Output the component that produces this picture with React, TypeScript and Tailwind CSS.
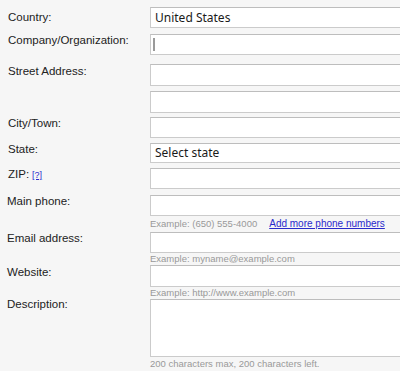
const label = "w-[150px] shrink-0 text-[11.5px] leading-[14px] text-[#222]";
const box = "w-[262px] shrink-0 border border-[#cbcbcb] border-t-[#bdbdbd] bg-white";
const hint = "text-[9.5px] leading-[12px] text-[#999]";

function Row({
  name,
  top,
  h,
  pad = "-mt-px pl-[8px]",
  children,
  className = "",
}: {
  name?: React.ReactNode;
  top: string;
  h: string;
  pad?: string;
  children?: React.ReactNode;
  className?: string;
}) {
  return (
    <div className={`flex items-start ${top}`}>
      <div className={`${label} ${pad}`}>{name}</div>
      <div className={`${box} ${h} ${className} flex items-center`}>{children}</div>
    </div>
  );
}

function Hint({ children, top = "" }: { children: React.ReactNode; top?: string }) {
  return (
    <div className={`flex ${top}`}>
      <div className="w-[150px] shrink-0" />
      <div className={`${hint} whitespace-nowrap`}>{children}</div>
    </div>
  );
}

export default function App() {
  return (
    <div
      className="w-[400px] h-[371px] overflow-hidden bg-[#f6f6f6] pt-[7px]"
      style={{ fontFamily: '"Liberation Sans", Arial, sans-serif' }}
    >
      <Row name="Country:" top="" h="h-[21px]" pad="pt-[3px] pl-[8px]">
        <span className="pl-[4px] text-[12px] text-[#1a1a1a] font-['Noto_Sans',sans-serif]">
          United States
        </span>
      </Row>
      <Row name="Company/Organization:" top="mt-[6px]" h="h-[21px]" className="bg-[#fffde8]">
        <span className="ml-[2px] w-[2px] h-[13px] bg-[#9a9a9a]" />
      </Row>
      <Row name="Street Address:" top="mt-[9px]" h="h-[22px]" pad="pt-0 pl-[8px]" />
      <Row top="mt-[5px]" h="h-[22px]" />
      <Row name="City/Town:" top="mt-[4px]" h="h-[21px]" />
      <Row name="State:" top="mt-[5px]" h="h-[20px]">
        <span className="pl-[4px] text-[12px] text-[#1a1a1a] font-['Noto_Sans',sans-serif]">
          Select state
        </span>
      </Row>
      <Row
        name={
          <span className="flex items-baseline gap-[3px]">
            ZIP:
            <a href="#" className="text-[9px] text-[#2a2acc] underline">
              [?]
            </a>
          </span>
        }
        top="mt-[5px]"
        h="h-[21px]"
      />
      <Row name="Main phone:" top="mt-[6px]" h="h-[21px]" pad="-mt-px pl-[7px]" />
      <Hint top="mt-[2px]">
        Example: (650) 555-4000
        <a href="#" className="ml-[12px] text-[10px] text-[#2a2acc] underline">
          Add more phone numbers
        </a>
      </Hint>
      <Row name="Email address:" top="mt-[2px]" h="h-[21px]" pad="-mt-px pl-[7px]" />
      <Hint>Example: myname@example.com</Hint>
      <Row name="Website:" top="" h="h-[22px]" pad="pt-0 pl-[7px]" />
      <Hint>Example: http://www.example.com</Hint>
      <Row name="Description:" top="" h="h-[58px]" pad="-mt-[2px] pl-[7px]" />
      <Hint top="mt-[1px]">200 characters max, 200 characters left.</Hint>
    </div>
  );
}
